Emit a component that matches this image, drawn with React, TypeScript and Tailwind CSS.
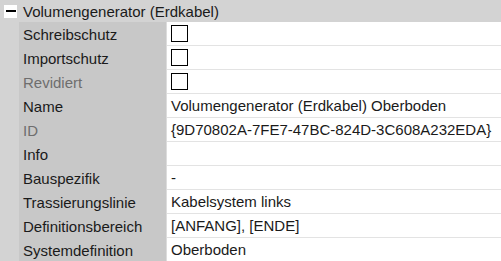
import React from "react";

type Row = { label: string; value?: string; checkbox?: boolean; dim?: boolean };

const rows: Row[] = [
  { label: "Schreibschutz", checkbox: true },
  { label: "Importschutz", checkbox: true },
  { label: "Revidiert", checkbox: true, dim: true },
  { label: "Name", value: "Volumengenerator (Erdkabel) Oberboden" },
  { label: "ID", value: "{9D70802A-7FE7-47BC-824D-3C608A232EDA}", dim: true },
  { label: "Info", value: "" },
  { label: "Bauspezifik", value: "-" },
  { label: "Trassierungslinie", value: "Kabelsystem links" },
  { label: "Definitionsbereich", value: "[ANFANG], [ENDE]" },
  { label: "Systemdefinition", value: "Oberboden" },
];

export default function App() {
  return (
    <div
      className="w-[501px] h-[261px] overflow-hidden bg-[#d3d3d3] text-[15px] text-[#1a1a1a]"
      style={{ fontFamily: '"Liberation Sans", Arial, sans-serif' }}
    >
      <div className="flex h-[22px] items-center">
        <div className="w-[19px] flex justify-center pl-[2px]">
          <div className="w-[13px] h-[13px] bg-white flex items-center justify-center">
            <div className="w-[10px] h-[2px] bg-black" />
          </div>
        </div>
        <div className="pl-[4px] leading-none">Volumengenerator (Erdkabel)</div>
      </div>
      <div className="flex flex-col">
        {rows.map((r) => (
          <div key={r.label} className="flex h-[24px]">
            <div className="w-[19px]" />
            <div
              className={`w-[147px] bg-[#c8c8c8] pl-[4px] flex items-center leading-none ${
                r.dim ? "text-[#6e6e6e]" : ""
              }`}
            >
              {r.label}
            </div>
            <div className="w-[1px] bg-[#dcdcdc]" />
            <div className="flex-1 bg-white border-b border-[#e3e3e3] pl-[4px] flex items-center leading-none">
              {r.checkbox ? (
                <div className="w-[17px] h-[17px] border border-black bg-white" />
              ) : (
                <span>{r.value}</span>
              )}
            </div>
          </div>
        ))}
      </div>
    </div>
  );
}
